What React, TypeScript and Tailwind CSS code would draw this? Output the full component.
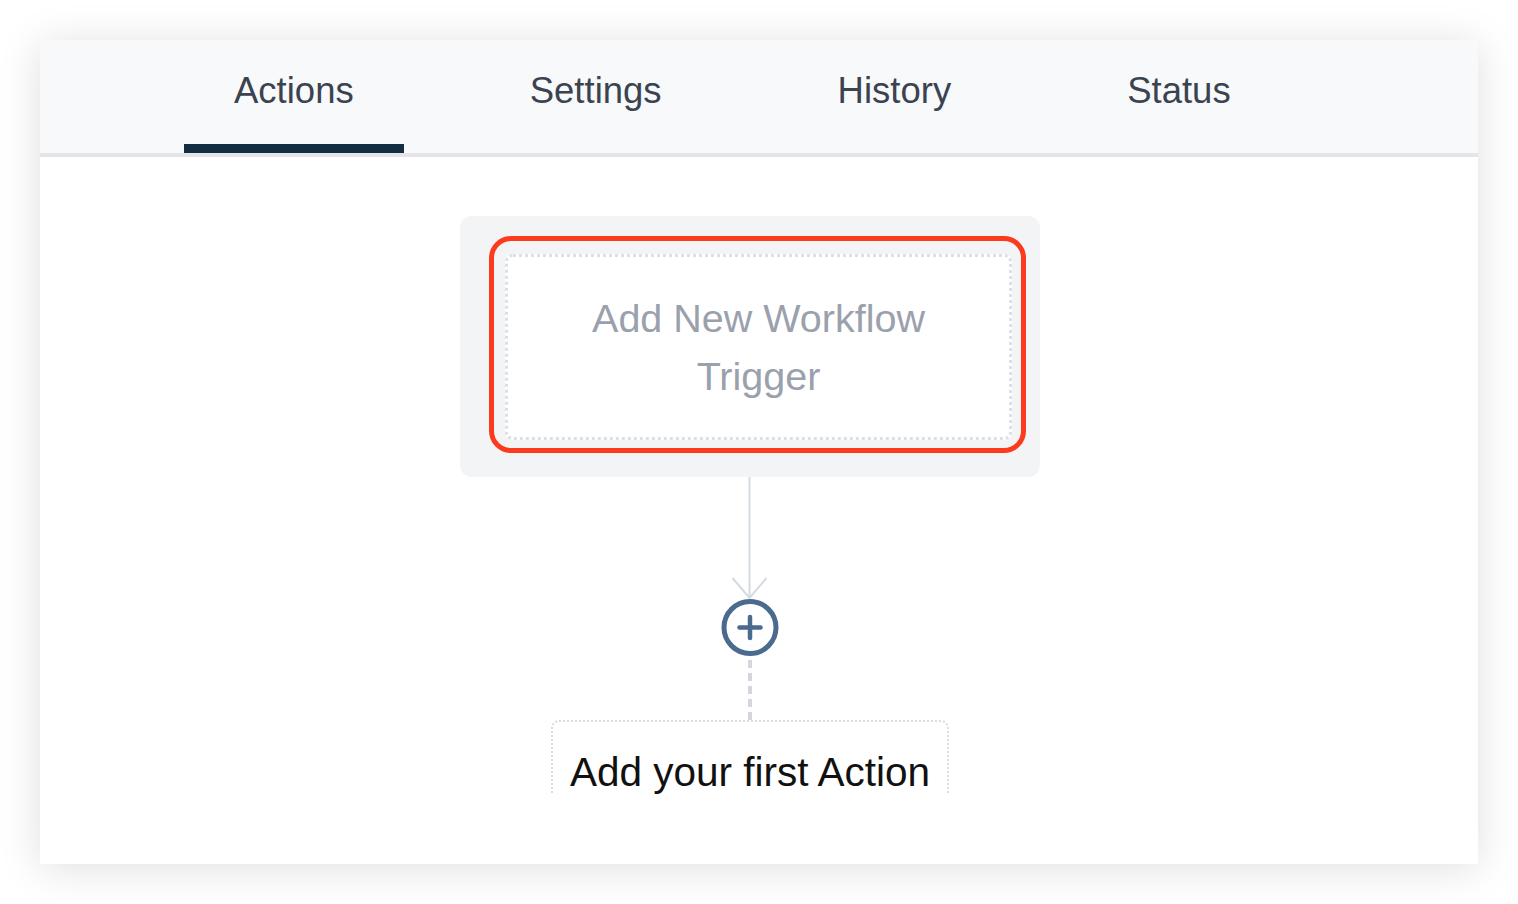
import React from 'react';

const tabs = ['Actions', 'Settings', 'History', 'Status'];

function Connector() {
  return (
    <svg width="60" height="243" viewBox="0 0 60 243" className="block shrink-0">
      <line x1="29.5" y1="0" x2="29.5" y2="120" stroke="#d5dae1" strokeWidth="2" />
      <polyline points="12.5,101 29.5,121 46.5,101" fill="none" stroke="#d5dae1" strokeWidth="2" />
      <circle cx="30" cy="150.5" r="26" fill="#fff" stroke="#4a6a8e" strokeWidth="5" />
      <line x1="19.5" y1="150.5" x2="40.5" y2="150.5" stroke="#4a6a8e" strokeWidth="4.5" strokeLinecap="round" />
      <line x1="30" y1="140" x2="30" y2="161" stroke="#4a6a8e" strokeWidth="4.5" strokeLinecap="round" />
      <line x1="30" y1="183" x2="30" y2="243" stroke="#d3d7dd" strokeWidth="4" strokeDasharray="8 5" />
    </svg>
  );
}

export default function App() {
  return (
    <div className="min-h-[904px] bg-white pt-[40px] pl-[40px]" style={{ fontFamily: '"Liberation Sans", Arial, sans-serif' }}>
      <div className="w-[1438px] h-[824px] bg-white shadow-[0_4px_40px_rgba(0,0,0,0.13)] flex flex-col">
        {/* Tabs */}
        <div className="h-[117px] shrink-0 bg-[#f8f9fb] border-b-[4px] border-[#e3e5e9] flex gap-[76px] pl-[144px]">
          {tabs.map((t, i) => (
            <div key={t} className="relative h-full px-[50px] pt-[33px] text-[36.5px] leading-[36px] text-[#3b4350]">
              {t}
              {i === 0 && <div className="absolute left-0 right-0 bottom-0 h-[9px] bg-[#132d42]" />}
            </div>
          ))}
        </div>

        {/* Canvas */}
        <div className="h-[637px] shrink-0 overflow-hidden flex flex-col items-center pt-[59px] pr-[18px]">
          <div className="shrink-0 bg-[#f3f4f6] rounded-[12px] pl-[45px] pr-[28px] pt-[38px] pb-[37px]">
            <div className="relative w-[507px] h-[186px] bg-white rounded-[8px] border-[3px] border-dotted border-[#dcdfe4] flex items-center justify-center text-center">
              <div className="absolute left-[-19px] right-[-17px] top-[-21px] bottom-[-16px] rounded-[22px] border-[5px] border-[#fb3a1e]" />
              <div className="text-[39.5px] leading-[58px] text-[#9aa1ad]">
                Add New Workflow
                <br />
                Trigger
              </div>
            </div>
          </div>
          <Connector />
          <div className="w-[398px] shrink-0 h-[120px] rounded-t-[8px] border-[2px] border-b-0 border-dotted border-[#d9dce1] pt-[21px] text-center text-[40.5px] leading-[58px] text-[#111111]">
            Add your first Action
          </div>
        </div>
      </div>
    </div>
  );
}
